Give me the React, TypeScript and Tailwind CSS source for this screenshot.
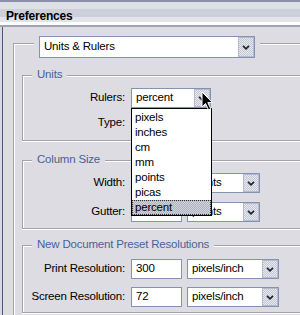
import React from "react";

/* ---------- Data ---------- */
const RULER_UNITS = ["pixels", "inches", "cm", "mm", "points", "picas", "percent"];

/* ---------- Bits ---------- */
const Chevron = () => (
  <svg width="8" height="5" viewBox="0 0 8 5">
    <path d="M1 0.8 L4 3.8 L7 0.8" fill="none" stroke="#1c2238" strokeWidth="1.7" />
  </svg>
);

const SelectBox = ({ text, className }: { text: string; className: string }) => (
  <div className={`flex bg-white border border-[#8593b3] ${className}`}>
    <span className="flex-1 flex items-center pl-[4px] whitespace-nowrap overflow-hidden">{text}</span>
    <span className="w-[16px] flex items-center justify-center border border-[#b3bbd0] bg-[repeating-conic-gradient(#c4c6d0_0_25%,#e8e9ee_0_50%)] bg-[length:2px_2px]">
      <Chevron />
    </span>
  </div>
);

const NumberBox = ({ value }: { value: string }) => (
  <div className="w-[51px] h-[20px] flex items-center pl-[4px] bg-white border border-[#8593b3]">{value}</div>
);

const Group = ({ title, className, children }: { title: string; className: string; children: React.ReactNode }) => (
  <div className={`border-l border-t border-b border-[#a2a2aa] shadow-[inset_1px_1px_0_#fff,0_1px_0_#fff] ${className}`}>
    <div className="-mt-[8px] ml-[9px] h-[14px] w-fit px-[5px] flex items-center bg-[#dcdce2] text-[#4a629a]">{title}</div>
    {children}
  </div>
);

const Row = ({ label, className, children }: { label: string; className: string; children: React.ReactNode }) => (
  <div className={`flex items-center ${className}`}>
    <span className="w-[102px] text-right">{label}</span>
    <div className="ml-[6px] flex gap-[5px]">{children}</div>
  </div>
);

const Cursor = () => (
  <svg className="absolute left-[70px] top-[3px] z-20" width="13" height="20" viewBox="0 0 13 20">
    <path d="M1 1 L1 16 L4.5 12.5 L7.5 18.8 L9.8 17.8 L6.8 11.6 L11.5 11.6 Z" fill="#000" stroke="#fff" strokeWidth="1" />
  </svg>
);

/* ---------- App ---------- */
export default function App() {
  return (
    <div className="w-[300px] h-[315px] overflow-hidden flex flex-col bg-[#dcdce2] text-black text-[11.5px] tracking-[-0.2px] font-['Liberation_Sans',Arial,sans-serif]">
      {/* Title bar */}
      <div className="h-[27px] shrink-0 flex items-center pt-[5px] pl-[6px] font-bold text-[12px] bg-[linear-gradient(to_bottom,#8a90a8_0px,#8a90a8_2px,#dfe0e6_2px,#dfe0e6_9px,#cdd0da_9px,#cdd0da_17px,#e3e4ea_17px,#e3e4ea_22px,#ffffff_22px,#ffffff_25px,#9ea3b6_25px,#9ea3b6_27px)]">
        Preferences
      </div>

      {/* Body */}
      <div className="flex-1 flex">
        <div className="w-[3px] shrink-0 bg-[#d8d9df] border-r border-[#4f5779]" />
        <div className="pl-[10px] pt-[16px]">
          <div className="w-[340px] h-[300px] pl-[8px] border-l border-t border-[#a2a2aa] shadow-[inset_1px_1px_0_#fff]">
            <div className="-mt-[8px] ml-[12px] w-fit px-[5px] bg-[#dcdce2]">
              <SelectBox text="Units & Rulers" className="w-[216px] h-[22px]" />
            </div>

            <Group title="Units" className="mt-[17px] pb-[7px]">
              <Row label="Rulers:" className="mt-[6px]">
                <div className="relative">
                  <SelectBox text="percent" className="w-[80px] h-[20px]" />
                  {/* open list */}
                  <div className="absolute left-0 top-[20px] z-10 w-[81px] pt-[1px] bg-white border border-black">
                    {RULER_UNITS.map((u) => (
                      <div
                        key={u}
                        className={
                          u === "percent"
                            ? "h-[15px] flex items-center pl-[2px] border border-dotted border-[#333] bg-[repeating-conic-gradient(#aeb1be_0_25%,#d2d4dc_0_50%)] bg-[length:2px_2px]"
                            : "h-[15px] flex items-center pl-[3px]"
                        }
                      >
                        {u}
                      </div>
                    ))}
                  </div>
                  <Cursor />
                </div>
              </Row>
              <Row label="Type:" className="mt-[5px]">
                <SelectBox text="" className="w-[80px] h-[20px]" />
              </Row>
            </Group>

            <Group title="Column Size" className="mt-[19px] pb-[6px]">
              <Row label="Width:" className="mt-[6px]">
                <NumberBox value="" />
                <SelectBox text="points" className="w-[73px] h-[20px]" />
              </Row>
              <Row label="Gutter:" className="mt-[9px]">
                <NumberBox value="" />
                <SelectBox text="points" className="w-[73px] h-[20px]" />
              </Row>
            </Group>

            <Group title="New Document Preset Resolutions" className="mt-[16px] pb-[5px]">
              <Row label="Print Resolution:" className="mt-[7px]">
                <NumberBox value="300" />
                <SelectBox text="pixels/inch" className="w-[92px] h-[20px]" />
              </Row>
              <Row label="Screen Resolution:" className="mt-[8px]">
                <NumberBox value="72" />
                <SelectBox text="pixels/inch" className="w-[92px] h-[20px]" />
              </Row>
            </Group>
          </div>
        </div>
      </div>
    </div>
  );
}
